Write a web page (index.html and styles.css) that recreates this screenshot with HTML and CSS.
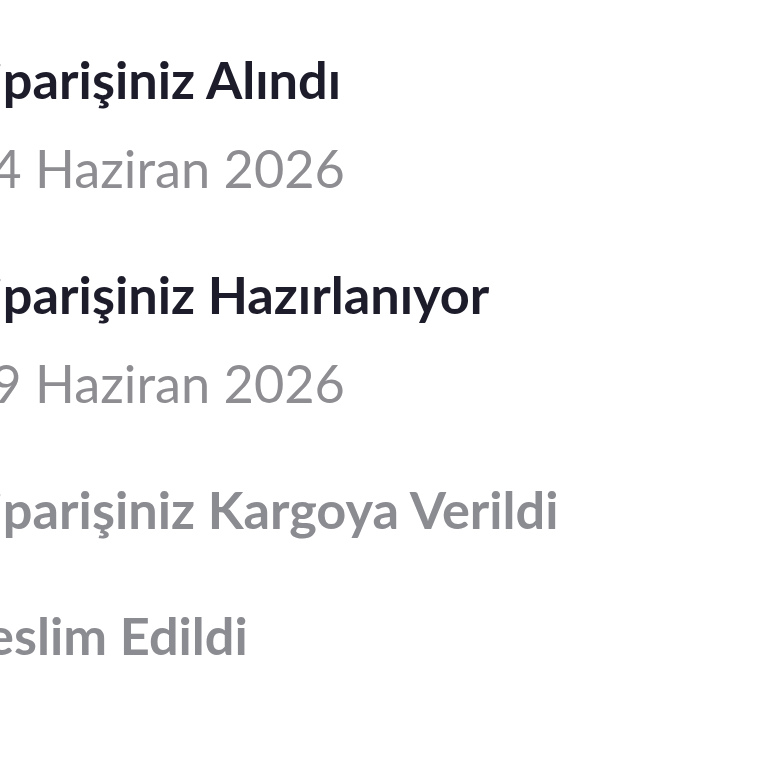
FILE: index.html
```html
<!DOCTYPE html>
<html lang="tr">
<head>
    <meta charset="UTF-8">
    <meta name="viewport" content="width=device-width, initial-scale=1.0">
    <title>Sipariş Durumu</title>
    <link rel="stylesheet" href="styles.css">
</head>
<body>
    <main>
        <ul class="timeline">
            <li class="step done">
                <div class="step-title">Siparişiniz Alındı</div>
                <div class="step-date">14 Haziran 2026</div>
            </li>
            <li class="step done">
                <div class="step-title">Siparişiniz Hazırlanıyor</div>
                <div class="step-date">19 Haziran 2026</div>
            </li>
            <li class="step">
                <div class="step-title">Siparişiniz Kargoya Verildi</div>
            </li>
            <li class="step">
                <div class="step-title">Teslim Edildi</div>
            </li>
        </ul>
    </main>
</body>
</html>
```

FILE: styles.css
```css
* {
    padding: 0;
    margin: 0;
    box-sizing: border-box;
    font-family: "Lato", "Noto Sans", sans-serif;
}
body {
    background-color: #fff;
    overflow: hidden;
}
main {
    width: 100vw;
    height: 100vh;
    padding-top: 48px;
}
.timeline {
    list-style: none;
    display: flex;
    flex-direction: column;
    gap: 64px;
    margin-left: -39px;
}
.step {
    display: flex;
    flex-direction: column;
    gap: 27px;
}
.step-title {
    font-size: 52.3px;
    line-height: 62px;
    font-weight: 700;
    color: #8b8b92;
    white-space: nowrap;
}
.step.done .step-title {
    color: #1d1c2b;
}
.step-date {
    font-size: 52.3px;
    line-height: 62px;
    font-weight: 400;
    color: #8d8d92;
    white-space: nowrap;
}
```
